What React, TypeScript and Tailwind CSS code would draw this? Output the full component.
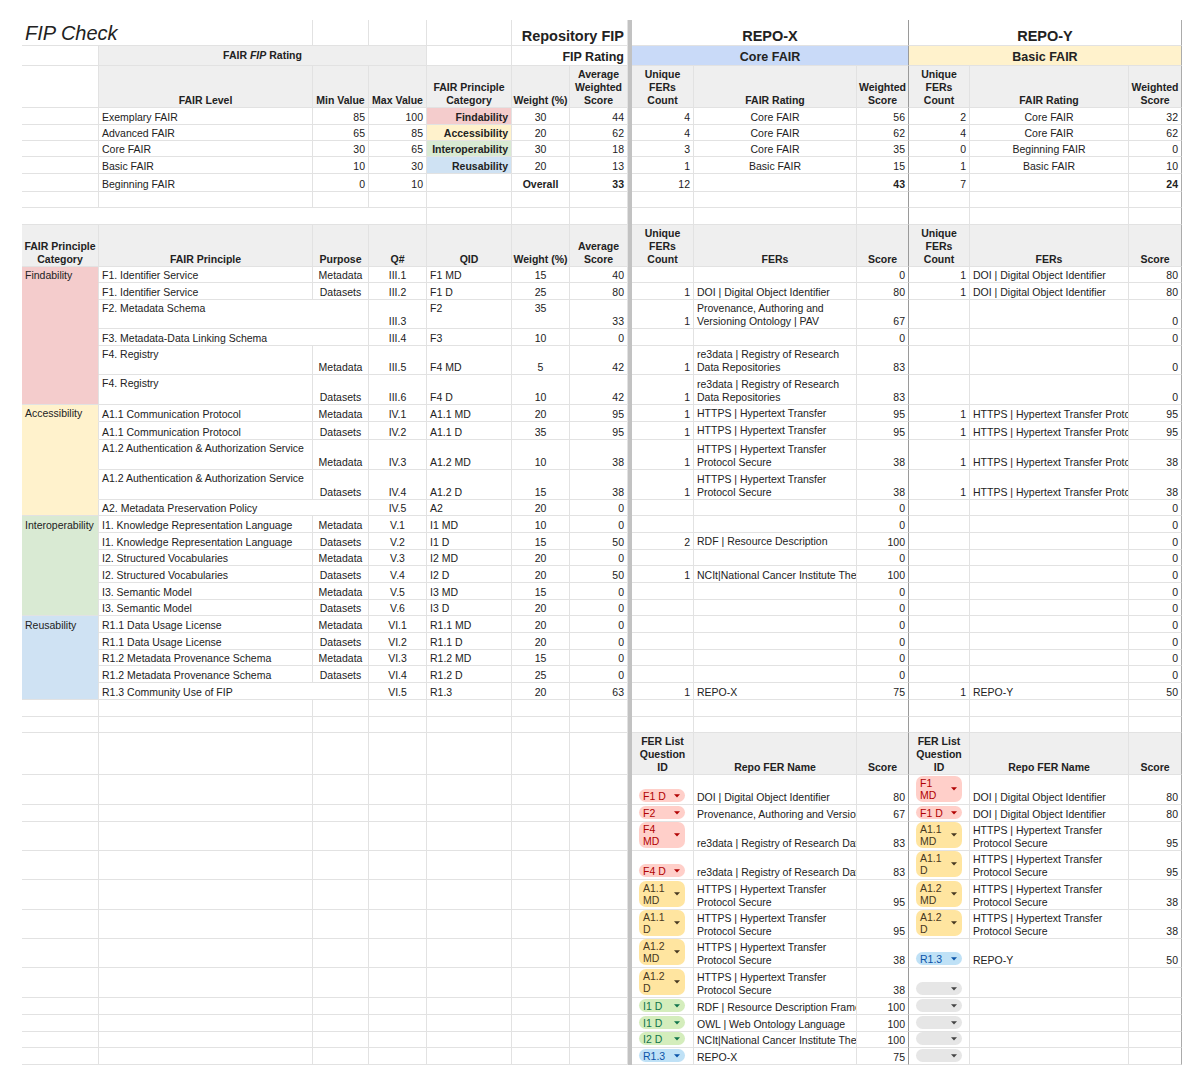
import React from 'react';

type Al = 'l' | 'r' | 'c';
type Va = 't' | 'b' | 'm' | 'B';
type Cell = {
  t?: React.ReactNode;
  span?: number;
  al?: Al;
  va?: Va;
  bold?: boolean;
  bg?: string;
  noB?: boolean;
  tc?: string;
  pad?: string;
};
type Row = { h: string; l: Cell[]; r: Cell[] };

const SPAN: Record<number, string> = { 1: '', 2: 'col-span-2', 3: 'col-span-3', 4: 'col-span-4' };
const ALC: Record<Al, string> = {
  l: 'justify-start text-left',
  r: 'justify-end text-right',
  c: 'justify-center text-center',
};
const VAC: Record<Va, string> = {
  t: 'items-start pt-[2px]',
  b: 'items-end pb-[0px]',
  B: 'items-end pb-[2px]',
  m: 'items-center',
};

const RED = 'bg-[#f4cccc]';
const YEL = 'bg-[#fff2cc]';
const GRN = 'bg-[#d9ead3]';
const BLU = 'bg-[#cfe2f3]';
const GRY = 'bg-[#efefef]';

const e = (o: Partial<Cell> = {}): Cell => ({ ...o });
const l = (t: React.ReactNode, o: Partial<Cell> = {}): Cell => ({ t, al: 'l', ...o });
const r = (t: React.ReactNode, o: Partial<Cell> = {}): Cell => ({ t, al: 'r', ...o });
const c = (t: React.ReactNode, o: Partial<Cell> = {}): Cell => ({ t, al: 'c', ...o });
const H = (t: React.ReactNode, o: Partial<Cell> = {}): Cell => ({ t, al: 'c', bold: true, bg: GRY, ...o });
const E7 = (): Cell[] => [e(), e(), e(), e(), e(), e(), e()];
const E6 = (): Cell[] => [e(), e(), e(), e(), e(), e()];

type ChipKind = 'red' | 'yellow' | 'green' | 'blue' | 'gray';
const CHIP: Record<ChipKind, { bg: string; tx: string; ar: string }> = {
  red: { bg: 'bg-[#ffcfc9]', tx: 'text-[#b10202]', ar: 'fill-[#b10202]' },
  yellow: { bg: 'bg-[#ffe5a0]', tx: 'text-[#473821]', ar: 'fill-[#473821]' },
  green: { bg: 'bg-[#d4edbc]', tx: 'text-[#11734b]', ar: 'fill-[#11734b]' },
  blue: { bg: 'bg-[#bfe1f6]', tx: 'text-[#0a53a8]', ar: 'fill-[#0a53a8]' },
  gray: { bg: 'bg-[#e6e6e6]', tx: 'text-[#444444]', ar: 'fill-[#444444]' },
};

function Chip({ k, lines }: { k: ChipKind; lines?: string[] }) {
  const s = CHIP[k];
  const two = !!lines && lines.length > 1;
  return (
    <div
      className={`flex w-[46px] items-center justify-between rounded-[7px] pl-[4px] pr-[5px] ${s.bg} ${
        two ? 'py-[1px]' : 'h-[13px]'
      }`}
    >
      <span className={`whitespace-nowrap leading-[12px] ${s.tx}`}>
        {lines?.map((x, i) => (
          <React.Fragment key={i}>
            {i > 0 && <br />}
            {x}
          </React.Fragment>
        ))}
      </span>
      <svg width="6" height="4" viewBox="0 0 6 4" className={s.ar}>
        <path d="M0 0.3h6L3 3.6z" />
      </svg>
    </div>
  );
}

const ch = (k: ChipKind, lines?: string[]): Cell => ({ t: <Chip k={k} lines={lines} />, al: 'l', va: 'B', pad: 'px-[7px]' });

const HT = ['HTTPS | Hypertext Transfer', 'Protocol Secure'];
const HTP = 'HTTPS | Hypertext Transfer Protocol Secure';
const DOI = 'DOI | Digital Object Identifier';
const RE3 = ['re3data | Registry of Research', 'Data Repositories'];

const rows: Row[] = [
  {
    h: 'h-[26px]',
    l: [
      l('FIP Check', { span: 2, va: 'm', tc: 'text-[20px] italic leading-[24px]' }),
      e(),
      e(),
      e(),
      r('Repository FIP', { span: 2, bold: true, tc: 'text-[14.5px] leading-[17px]' }),
    ],
    r: [
      c('REPO-X', { span: 3, bold: true, tc: 'text-[14.5px] leading-[17px]' }),
      c('REPO-Y', { span: 3, bold: true, tc: 'text-[14.5px] leading-[17px]' }),
    ],
  },
  {
    h: 'h-[20px]',
    l: [
      e(),
      c(
        <>
          FAIR <i>FIP</i> Rating
        </>,
        { span: 3, bold: true, bg: GRY, va: 'm' }
      ),
      e(),
      r('FIP Rating', { span: 2, bold: true, tc: 'text-[12.5px] leading-[15px]' }),
    ],
    r: [
      c('Core FAIR', { span: 3, bold: true, bg: 'bg-[#c9daf8]', tc: 'text-[12.5px] leading-[15px]' }),
      c('Basic FAIR', { span: 3, bold: true, bg: 'bg-[#fff2cc]', tc: 'text-[12.5px] leading-[15px]' }),
    ],
  },
  {
    h: 'h-[42px]',
    l: [
      e(),
      H('FAIR Level'),
      H('Min Value'),
      H('Max Value'),
      H(['FAIR Principle', 'Category']),
      H('Weight (%)'),
      H(['Average', 'Weighted', 'Score']),
    ],
    r: [
      H(['Unique', 'FERs', 'Count']),
      H('FAIR Rating'),
      H(['Weighted', 'Score']),
      H(['Unique', 'FERs', 'Count']),
      H('FAIR Rating'),
      H(['Weighted', 'Score']),
    ],
  },
  {
    h: 'h-[17px]',
    l: [e(), l('Exemplary FAIR'), r('85'), r('100'), r('Findability', { bold: true, bg: RED }), c('30'), r('44')],
    r: [r('4'), c('Core FAIR'), r('56'), r('2'), c('Core FAIR'), r('32')],
  },
  {
    h: 'h-[16px]',
    l: [e(), l('Advanced FAIR'), r('65'), r('85'), r('Accessibility', { bold: true, bg: YEL }), c('20'), r('62')],
    r: [r('4'), c('Core FAIR'), r('62'), r('4'), c('Core FAIR'), r('62')],
  },
  {
    h: 'h-[16px]',
    l: [e(), l('Core FAIR'), r('30'), r('65'), r('Interoperability', { bold: true, bg: GRN }), c('30'), r('18')],
    r: [r('3'), c('Core FAIR'), r('35'), r('0'), c('Beginning FAIR'), r('0')],
  },
  {
    h: 'h-[17px]',
    l: [e(), l('Basic FAIR'), r('10'), r('30'), r('Reusability', { bold: true, bg: BLU }), c('20'), r('13')],
    r: [r('1'), c('Basic FAIR'), r('15'), r('1'), c('Basic FAIR'), r('10')],
  },
  {
    h: 'h-[18px]',
    l: [e(), l('Beginning FAIR'), r('0'), r('10'), e(), c('Overall', { bold: true }), r('33', { bold: true })],
    r: [r('12'), e(), r('43', { bold: true }), r('7'), e(), r('24', { bold: true })],
  },
  { h: 'h-[16px]', l: E7(), r: E6() },
  { h: 'h-[17px]', l: [e({ span: 4 }), e(), e(), e()], r: E6() },
  {
    h: 'h-[42px]',
    l: [
      H(['FAIR Principle', 'Category']),
      H('FAIR Principle'),
      H('Purpose'),
      H('Q#'),
      H('QID'),
      H('Weight (%)'),
      H(['Average', 'Score']),
    ],
    r: [
      H(['Unique', 'FERs', 'Count']),
      H('FERs'),
      H('Score'),
      H(['Unique', 'FERs', 'Count']),
      H('FERs'),
      H('Score'),
    ],
  },
  // Findability
  {
    h: 'h-[16px]',
    l: [l('Findability', { bg: RED, noB: true }), l('F1. Identifier Service'), c('Metadata'), c('III.1'), l('F1 MD'), c('15'), r('40')],
    r: [e(), e(), r('0'), r('1'), l(DOI), r('80')],
  },
  {
    h: 'h-[17px]',
    l: [e({ bg: RED, noB: true }), l('F1. Identifier Service'), c('Datasets'), c('III.2'), l('F1 D'), c('25'), r('80')],
    r: [r('1'), l(DOI), r('80'), r('1'), l(DOI), r('80')],
  },
  {
    h: 'h-[29px]',
    l: [
      e({ bg: RED, noB: true }),
      l('F2. Metadata Schema', { span: 2, va: 't' }),
      c('III.3'),
      l('F2', { va: 't' }),
      c('35', { va: 't' }),
      r('33'),
    ],
    r: [r('1'), l(['Provenance, Authoring and', 'Versioning Ontology | PAV']), r('67'), e(), e(), r('0')],
  },
  {
    h: 'h-[17px]',
    l: [e({ bg: RED, noB: true }), l('F3. Metadata-Data Linking Schema', { span: 2 }), c('III.4'), l('F3'), c('10'), r('0')],
    r: [e(), e(), r('0'), e(), e(), r('0')],
  },
  {
    h: 'h-[29px]',
    l: [e({ bg: RED, noB: true }), l('F4. Registry', { va: 't' }), c('Metadata'), c('III.5'), l('F4 MD'), c('5'), r('42')],
    r: [r('1'), l(RE3), r('83'), e(), e(), r('0')],
  },
  {
    h: 'h-[30px]',
    l: [e({ bg: RED }), l('F4. Registry', { va: 't' }), c('Datasets'), c('III.6'), l('F4 D'), c('10'), r('42')],
    r: [r('1'), l(RE3), r('83'), e(), e(), r('0')],
  },
  // Accessibility
  {
    h: 'h-[17px]',
    l: [l('Accessibility', { bg: YEL, noB: true, va: 't' }), l('A1.1 Communication Protocol'), c('Metadata'), c('IV.1'), l('A1.1 MD'), c('20'), r('95')],
    r: [r('1'), l(HT, { va: 't' }), r('95'), r('1'), l(HTP), r('95')],
  },
  {
    h: 'h-[18px]',
    l: [e({ bg: YEL, noB: true }), l('A1.1 Communication Protocol'), c('Datasets'), c('IV.2'), l('A1.1 D'), c('35'), r('95')],
    r: [r('1'), l(HT, { va: 't' }), r('95'), r('1'), l(HTP), r('95')],
  },
  {
    h: 'h-[30px]',
    l: [
      e({ bg: YEL, noB: true }),
      l('A1.2 Authentication & Authorization Service', { va: 't' }),
      c('Metadata'),
      c('IV.3'),
      l('A1.2 MD'),
      c('10'),
      r('38'),
    ],
    r: [r('1'), l(HT), r('38'), r('1'), l(HTP), r('38')],
  },
  {
    h: 'h-[30px]',
    l: [
      e({ bg: YEL, noB: true }),
      l('A1.2 Authentication & Authorization Service', { va: 't' }),
      c('Datasets'),
      c('IV.4'),
      l('A1.2 D'),
      c('15'),
      r('38'),
    ],
    r: [r('1'), l(HT), r('38'), r('1'), l(HTP), r('38')],
  },
  {
    h: 'h-[16px]',
    l: [e({ bg: YEL }), l('A2. Metadata Preservation Policy', { span: 2 }), c('IV.5'), l('A2'), c('20'), r('0')],
    r: [e(), e(), r('0'), e(), e(), r('0')],
  },
  // Interoperability
  {
    h: 'h-[17px]',
    l: [l('Interoperability', { bg: GRN, noB: true }), l('I1. Knowledge Representation Language'), c('Metadata'), c('V.1'), l('I1 MD'), c('10'), r('0')],
    r: [e(), e(), r('0'), e(), e(), r('0')],
  },
  {
    h: 'h-[17px]',
    l: [e({ bg: GRN, noB: true }), l('I1. Knowledge Representation Language'), c('Datasets'), c('V.2'), l('I1 D'), c('15'), r('50')],
    r: [r('2'), l(['RDF | Resource Description', 'Framework'], { va: 't' }), r('100'), e(), e(), r('0')],
  },
  {
    h: 'h-[16px]',
    l: [e({ bg: GRN, noB: true }), l('I2. Structured Vocabularies'), c('Metadata'), c('V.3'), l('I2 MD'), c('20'), r('0')],
    r: [e(), e(), r('0'), e(), e(), r('0')],
  },
  {
    h: 'h-[17px]',
    l: [e({ bg: GRN, noB: true }), l('I2. Structured Vocabularies'), c('Datasets'), c('V.4'), l('I2 D'), c('20'), r('50')],
    r: [r('1'), l('NCIt|National Cancer Institute Thesaurus'), r('100'), e(), e(), r('0')],
  },
  {
    h: 'h-[17px]',
    l: [e({ bg: GRN, noB: true }), l('I3. Semantic Model'), c('Metadata'), c('V.5'), l('I3 MD'), c('15'), r('0')],
    r: [e(), e(), r('0'), e(), e(), r('0')],
  },
  {
    h: 'h-[16px]',
    l: [e({ bg: GRN }), l('I3. Semantic Model'), c('Datasets'), c('V.6'), l('I3 D'), c('20'), r('0')],
    r: [e(), e(), r('0'), e(), e(), r('0')],
  },
  // Reusability
  {
    h: 'h-[17px]',
    l: [l('Reusability', { bg: BLU, noB: true }), l('R1.1 Data Usage License'), c('Metadata'), c('VI.1'), l('R1.1 MD'), c('20'), r('0')],
    r: [e(), e(), r('0'), e(), e(), r('0')],
  },
  {
    h: 'h-[17px]',
    l: [e({ bg: BLU, noB: true }), l('R1.1 Data Usage License'), c('Datasets'), c('VI.2'), l('R1.1 D'), c('20'), r('0')],
    r: [e(), e(), r('0'), e(), e(), r('0')],
  },
  {
    h: 'h-[16px]',
    l: [e({ bg: BLU, noB: true }), l('R1.2 Metadata Provenance Schema'), c('Metadata'), c('VI.3'), l('R1.2 MD'), c('15'), r('0')],
    r: [e(), e(), r('0'), e(), e(), r('0')],
  },
  {
    h: 'h-[17px]',
    l: [e({ bg: BLU, noB: true }), l('R1.2 Metadata Provenance Schema'), c('Datasets'), c('VI.4'), l('R1.2 D'), c('25'), r('0')],
    r: [e(), e(), r('0'), e(), e(), r('0')],
  },
  {
    h: 'h-[17px]',
    l: [e({ bg: BLU }), l('R1.3 Community Use of FIP', { span: 2 }), c('VI.5'), l('R1.3'), c('20'), r('63')],
    r: [r('1'), l('REPO-X'), r('75'), r('1'), l('REPO-Y'), r('50')],
  },
  { h: 'h-[17px]', l: E7(), r: E6() },
  { h: 'h-[16px]', l: E7(), r: E6() },
  {
    h: 'h-[42px]',
    l: E7(),
    r: [
      H(['FER List', 'Question', 'ID']),
      H('Repo FER Name'),
      H('Score'),
      H(['FER List', 'Question', 'ID']),
      H('Repo FER Name'),
      H('Score'),
    ],
  },
  {
    h: 'h-[30px]',
    l: E7(),
    r: [ch('red', ['F1 D']), l(DOI), r('80'), ch('red', ['F1', 'MD']), l(DOI), r('80')],
  },
  {
    h: 'h-[17px]',
    l: E7(),
    r: [ch('red', ['F2']), l('Provenance, Authoring and Versioning Ontology | PAV'), r('67'), ch('red', ['F1 D']), l(DOI), r('80')],
  },
  {
    h: 'h-[29px]',
    l: E7(),
    r: [ch('red', ['F4', 'MD']), l('re3data | Registry of Research Data Repositories'), r('83'), ch('yellow', ['A1.1', 'MD']), l(HT), r('95')],
  },
  {
    h: 'h-[29px]',
    l: E7(),
    r: [ch('red', ['F4 D']), l('re3data | Registry of Research Data Repositories'), r('83'), ch('yellow', ['A1.1', 'D']), l(HT), r('95')],
  },
  {
    h: 'h-[30px]',
    l: E7(),
    r: [ch('yellow', ['A1.1', 'MD']), l(HT), r('95'), ch('yellow', ['A1.2', 'MD']), l(HT), r('38')],
  },
  {
    h: 'h-[29px]',
    l: E7(),
    r: [ch('yellow', ['A1.1', 'D']), l(HT), r('95'), ch('yellow', ['A1.2', 'D']), l(HT), r('38')],
  },
  {
    h: 'h-[29px]',
    l: E7(),
    r: [ch('yellow', ['A1.2', 'MD']), l(HT), r('38'), ch('blue', ['R1.3']), l('REPO-Y'), r('50')],
  },
  {
    h: 'h-[30px]',
    l: E7(),
    r: [ch('yellow', ['A1.2', 'D']), l(HT), r('38'), ch('gray'), e(), e()],
  },
  {
    h: 'h-[17px]',
    l: E7(),
    r: [ch('green', ['I1 D']), l('RDF | Resource Description Framework'), r('100'), ch('gray'), e(), e()],
  },
  {
    h: 'h-[17px]',
    l: E7(),
    r: [ch('green', ['I1 D']), l('OWL | Web Ontology Language'), r('100'), ch('gray'), e(), e()],
  },
  {
    h: 'h-[16px]',
    l: E7(),
    r: [ch('green', ['I2 D']), l('NCIt|National Cancer Institute Thesaurus'), r('100'), ch('gray'), e(), e()],
  },
  {
    h: 'h-[17px]',
    l: E7(),
    r: [ch('blue', ['R1.3']), l('REPO-X'), r('75'), ch('gray'), e(), e()],
  },
];

function CellView({ c: cell, edge }: { c: Cell; edge: string }) {
  const va = cell.va ?? 'b';
  const al = cell.al ?? 'l';
  const content = Array.isArray(cell.t)
    ? (cell.t as React.ReactNode[]).map((x, i) => (
        <React.Fragment key={i}>
          {i > 0 && <br />}
          {x}
        </React.Fragment>
      ))
    : cell.t;
  return (
    <div
      className={`flex min-w-0 overflow-hidden border-b border-r ${
        cell.noB ? 'border-b-transparent' : 'border-b-[#e2e2e2]'
      } ${edge} ${SPAN[cell.span ?? 1]} ${ALC[al]} ${VAC[va]} ${cell.pad ?? 'px-[3px]'} ${cell.bg ?? ''} ${
        cell.bold ? 'font-bold' : ''
      }`}
    >
      <span className={`whitespace-nowrap ${cell.tc ?? 'leading-[13px]'}`}>{content}</span>
    </div>
  );
}

function RowView({ row }: { row: Row }) {
  let rc = 0;
  return (
    <div
      className={`grid grid-cols-[77px_214px_56px_58px_85px_58px_58px_4px_62px_163px_52px_61px_159px_53px] grid-rows-[minmax(0,1fr)] ${row.h}`}
    >
      {row.l.map((cl, i) => (
        <CellView key={'l' + i} c={cl} edge="border-r-[#e2e2e2]" />
      ))}
      <div className="bg-[#c2c2c2]" />
      {row.r.map((cl, i) => {
        rc += cl.span ?? 1;
        const edge = rc === 3 ? 'border-r-[#9a9a9a]' : rc === 6 ? 'border-r-[#ababab]' : 'border-r-[#e2e2e2]';
        return <CellView key={'r' + i} c={cl} edge={edge} />;
      })}
    </div>
  );
}

export default function App() {
  return (
    <div className="min-h-[1084px] w-[1200px] bg-white pl-[22px] pt-[20px] font-['Liberation_Sans',Arial,sans-serif] text-[10.5px] text-[#222222]">
      <div className="flex w-[1160px] flex-col">
        {rows.map((row, i) => (
          <RowView key={i} row={row} />
        ))}
      </div>
    </div>
  );
}
